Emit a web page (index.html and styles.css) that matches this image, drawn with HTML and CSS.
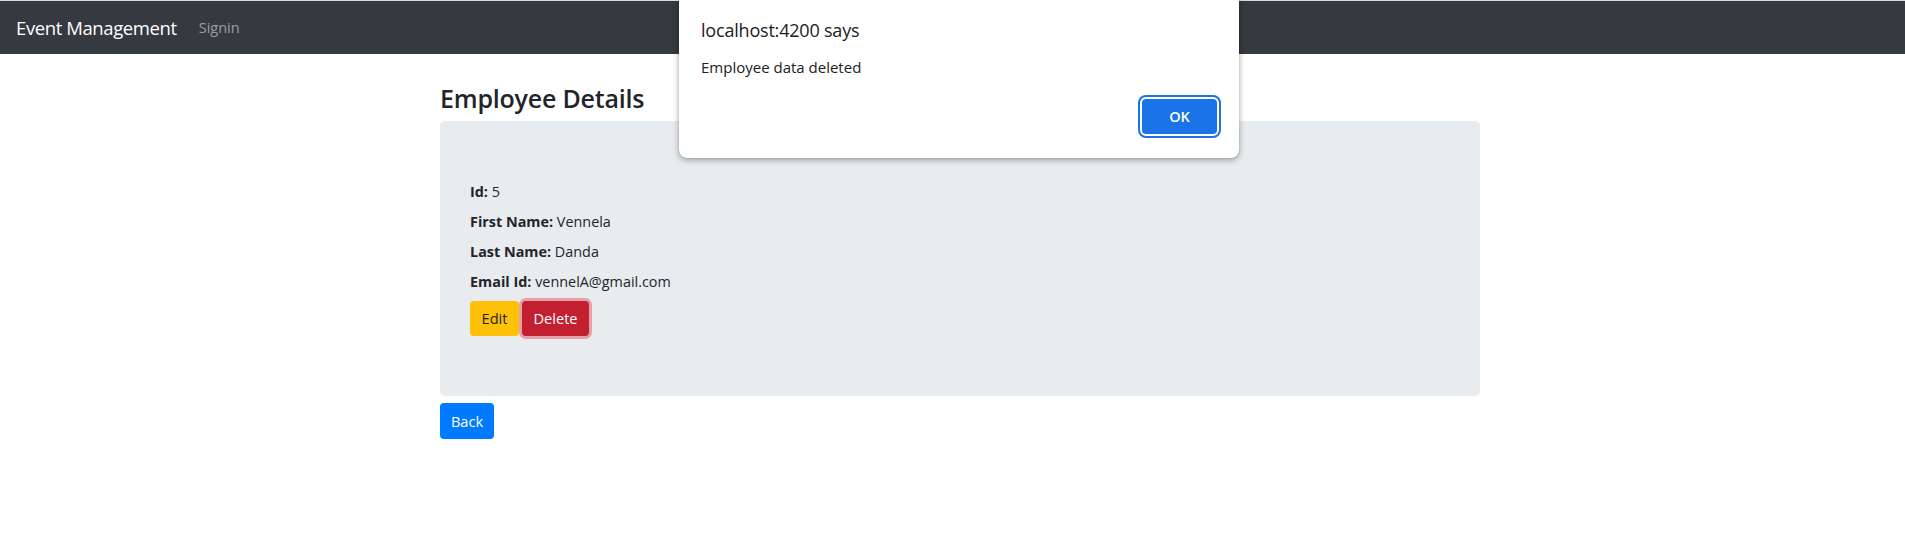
FILE: index.html
```html
<!DOCTYPE html>
<html>
<head>
<meta charset="utf-8">
<link rel="stylesheet" href="styles.css">
</head>
<body>
<nav class="navbar">
  <span class="brand">Event Management</span>
  <span class="nav-link">Signin</span>
</nav>
<main class="page">
  <h4 class="title">Employee Details</h4>
  <section class="jumbotron">
    <div class="row"><b>Id:</b> 5</div>
    <div class="row"><b>First Name:</b> Vennela</div>
    <div class="row"><b>Last Name:</b> Danda</div>
    <div class="row"><b>Email Id:</b> vennelA@gmail.com</div>
    <div class="actions">
      <button class="btn btn-warning">Edit</button>
      <button class="btn btn-danger focus">Delete</button>
    </div>
  </section>
  <button class="btn btn-primary back">Back</button>
</main>
<div class="dialog">
  <div class="dialog-title">localhost:4200 says</div>
  <div class="dialog-msg">Employee data deleted</div>
  <div class="dialog-actions">
    <button class="ok">OK</button>
  </div>
</div>
</body>
</html>
```
FILE: styles.css
```css
* { box-sizing: border-box; }
html, body { margin: 0; padding: 0; background: #fff; }
body {
  font-family: "Open Sans", "Noto Sans", sans-serif;
  color: #212529;
  font-size: 14px;
}
.navbar {
  border-top: 1px solid #d9dadb;
  height: 54px;
  background: #343a40;
  display: flex;
  align-items: center;
  padding: 0 16px;
}
.brand {
  color: #fff;
  font-size: 18.5px;
  letter-spacing: -0.4px;
}
.nav-link {
  color: rgba(255,255,255,.5);
  font-size: 14.5px;
  margin-left: 22px;
}
.page {
  margin-left: 440px;
  width: 1040px;
}
.title {
  margin: 0;
  padding-top: 29px;
  height: 67px;
  font-size: 25px;
  font-weight: 600;
  line-height: 30px;
  letter-spacing: -0.2px;
}
.jumbotron {
  background: #e9ecef;
  border-radius: 5px;
  height: 275px;
  padding: 56px 30px 0;
}
.row {
  height: 30px;
  line-height: 30px;
  font-size: 14.4px;
}
.row b { font-weight: 700; }
.actions {
  margin-top: 4px;
  display: flex;
  gap: 3px;
}
.btn {
  font-family: inherit;
  font-size: 14.6px;
  border: 1px solid transparent;
  border-radius: 4px;
  height: 35px;
  padding: 0;
  line-height: 33px;
}
.btn-warning { background: #ffc107; color: #212529; width: 49px; }
.btn-danger { background: #c21f31; color: #fff; width: 67px; }
.btn-danger.focus { box-shadow: 0 0 0 3px rgba(225,83,97,.5); }
.btn-primary { background: #007bff; color: #fff; }
.back {
  margin-top: 7px;
  width: 54px;
  height: 36px;
}
.dialog {
  position: absolute;
  left: 679px;
  top: 0;
  width: 560px;
  height: 158px;
  background: #fff;
  border-radius: 0 0 8px 8px;
  box-shadow: 0 2px 6px rgba(0,0,0,.35), 0 0 1px rgba(0,0,0,.3);
  padding: 0 20px 0 22px;
}
.dialog-title {
  padding-top: 18px;
  font-size: 18px;
  line-height: 24px;
  color: #202124;
  letter-spacing: -0.2px;
}
.dialog-msg {
  margin-top: 15px;
  font-size: 15px;
  line-height: 20px;
  color: #202124;
}
.dialog-actions {
  display: flex;
  justify-content: flex-end;
  margin-top: 20px;
}
.ok {
  width: 79px;
  height: 39px;
  background: #1a73e8;
  color: #fff;
  font-family: inherit;
  font-weight: 600;
  font-size: 14.5px;
  border: 2px solid #fff;
  border-radius: 6px;
  box-shadow: 0 0 0 2px #1a73e8;
}
```
